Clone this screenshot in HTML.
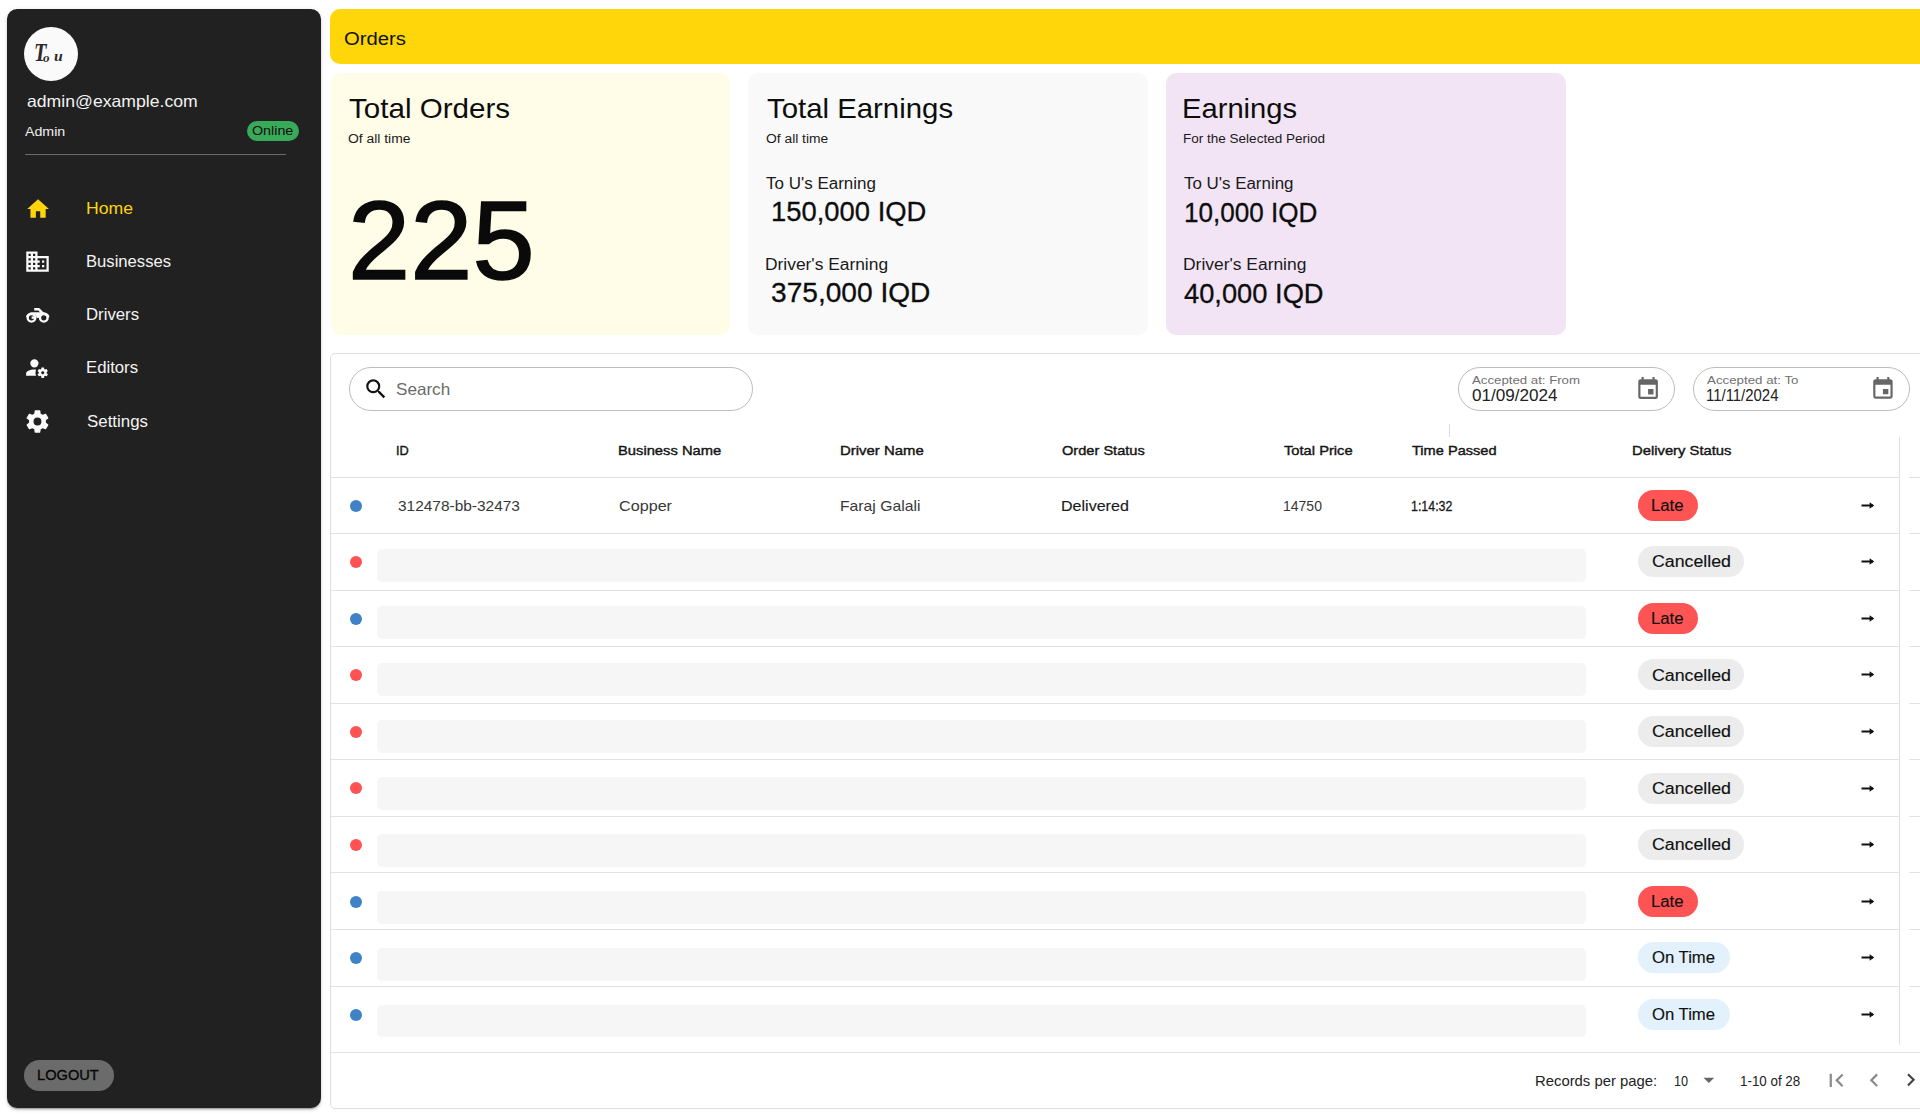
<!DOCTYPE html>
<html><head><meta charset="utf-8"><style>
html,body{margin:0;padding:0;background:#fff;width:1920px;height:1117px;overflow:hidden;}
body{position:relative;font-family:"Liberation Sans",sans-serif;}
.t{position:absolute;white-space:nowrap;line-height:1;transform-origin:0 0;font-family:"Liberation Sans",sans-serif;}
.ic{position:absolute;display:block;}
.box{position:absolute;box-sizing:border-box;}
.dot{position:absolute;left:349.5px;width:12.1px;height:12.1px;border-radius:50%;}
.skel{position:absolute;left:377.3px;width:1208.5px;height:32.4px;border-radius:5px;background:#f6f6f6;}
.chip{position:absolute;left:1637.5px;height:31px;border-radius:16px;}
.hl{position:absolute;left:331px;width:1568px;height:1px;background:#e2e2e2;}
.hl2{position:absolute;left:1909px;width:11px;height:1px;background:#e2e2e2;}
</style></head><body>
<div class="box" style="left:7px;top:9px;width:314px;height:1099px;background:#212121;border-radius:10px;box-shadow:0 3px 1px -2px rgba(0,0,0,.2),0 2px 2px 0 rgba(0,0,0,.14),0 1px 5px 0 rgba(0,0,0,.12)"></div>
<div class="box" style="left:24px;top:26.5px;width:54px;height:54px;border-radius:50%;background:#fafafa"></div>

<div class="box" style="left:246.7px;top:120.8px;width:52.3px;height:20.2px;border-radius:11px;background:#39a95a"></div>
<div class="box" style="left:25px;top:154px;width:261px;height:1px;background:#6a6a6a"></div>
<div class="box" style="left:24px;top:1059.7px;width:89.8px;height:31.3px;border-radius:16px;background:#6b6b6b"></div>

<div class="box" style="left:330px;top:9px;width:1600px;height:55px;background:#ffd60a;border-radius:10px 0 0 10px"></div>
<div class="box" style="left:331px;top:73px;width:399px;height:261.6px;background:#fffce8;border-radius:10px"></div>
<div class="box" style="left:748px;top:73px;width:400px;height:261.6px;background:#f9f9f9;border-radius:10px"></div>
<div class="box" style="left:1166px;top:73px;width:400px;height:261.6px;background:#f2e4f4;border-radius:10px"></div>

<div class="box" style="left:330px;top:352.5px;width:1600px;height:756px;border:1px solid #dedede;border-radius:5px"></div>
<div class="box" style="left:349px;top:367px;width:404px;height:44px;border:1px solid #bdbdbd;border-radius:22px"></div>
<div class="box" style="left:1458px;top:367px;width:217px;height:44px;border:1px solid #bdbdbd;border-radius:22px"></div>
<div class="box" style="left:1693px;top:367px;width:217px;height:44px;border:1px solid #bdbdbd;border-radius:22px"></div>
<div class="box" style="left:1448.5px;top:423.5px;width:1px;height:13px;background:#dcdcdc"></div>
<div class="box" style="left:331px;top:476.5px;width:1568px;height:1px;background:#e0e0e0"></div>
<div class="box" style="left:1909px;top:476.5px;width:11px;height:1px;background:#e0e0e0"></div>
<div class="box" style="left:1899px;top:437px;width:1px;height:608px;background:#e0e0e0"></div>
<div class="box" style="left:331px;top:1052px;width:1589px;height:1px;background:#e0e0e0"></div>
<div class="dot" style="top:499.58px;background:#3f82c6"></div><div class="chip" style="top:489.78px;width:60.5px;background:#ff5454"></div><svg class="ic" style="left:1861px;top:500.78px;width:14px;height:9px" viewBox="0 0 14 9"><path d="M0.5 4.5H12" stroke="#111" stroke-width="2"/><path d="M8.6 1.2L13.2 4.5L8.6 7.8Z" fill="#111"/></svg><div class="dot" style="top:556.14px;background:#ff5252"></div><div class="skel" style="top:549.40px"></div><div class="chip" style="top:546.34px;width:106.5px;background:#ececec"></div><svg class="ic" style="left:1861px;top:557.34px;width:14px;height:9px" viewBox="0 0 14 9"><path d="M0.5 4.5H12" stroke="#111" stroke-width="2"/><path d="M8.6 1.2L13.2 4.5L8.6 7.8Z" fill="#111"/></svg><div class="hl" style="top:533.06px"></div><div class="hl2" style="top:533.06px"></div><div class="dot" style="top:612.70px;background:#3f82c6"></div><div class="skel" style="top:606.36px"></div><div class="chip" style="top:602.90px;width:60.5px;background:#ff5454"></div><svg class="ic" style="left:1861px;top:613.90px;width:14px;height:9px" viewBox="0 0 14 9"><path d="M0.5 4.5H12" stroke="#111" stroke-width="2"/><path d="M8.6 1.2L13.2 4.5L8.6 7.8Z" fill="#111"/></svg><div class="hl" style="top:589.62px"></div><div class="hl2" style="top:589.62px"></div><div class="dot" style="top:669.26px;background:#ff5252"></div><div class="skel" style="top:663.32px"></div><div class="chip" style="top:659.46px;width:106.5px;background:#ececec"></div><svg class="ic" style="left:1861px;top:670.46px;width:14px;height:9px" viewBox="0 0 14 9"><path d="M0.5 4.5H12" stroke="#111" stroke-width="2"/><path d="M8.6 1.2L13.2 4.5L8.6 7.8Z" fill="#111"/></svg><div class="hl" style="top:646.18px"></div><div class="hl2" style="top:646.18px"></div><div class="dot" style="top:725.82px;background:#ff5252"></div><div class="skel" style="top:720.28px"></div><div class="chip" style="top:716.02px;width:106.5px;background:#ececec"></div><svg class="ic" style="left:1861px;top:727.02px;width:14px;height:9px" viewBox="0 0 14 9"><path d="M0.5 4.5H12" stroke="#111" stroke-width="2"/><path d="M8.6 1.2L13.2 4.5L8.6 7.8Z" fill="#111"/></svg><div class="hl" style="top:702.74px"></div><div class="hl2" style="top:702.74px"></div><div class="dot" style="top:782.38px;background:#ff5252"></div><div class="skel" style="top:777.24px"></div><div class="chip" style="top:772.58px;width:106.5px;background:#ececec"></div><svg class="ic" style="left:1861px;top:783.58px;width:14px;height:9px" viewBox="0 0 14 9"><path d="M0.5 4.5H12" stroke="#111" stroke-width="2"/><path d="M8.6 1.2L13.2 4.5L8.6 7.8Z" fill="#111"/></svg><div class="hl" style="top:759.30px"></div><div class="hl2" style="top:759.30px"></div><div class="dot" style="top:838.94px;background:#ff5252"></div><div class="skel" style="top:834.20px"></div><div class="chip" style="top:829.14px;width:106.5px;background:#ececec"></div><svg class="ic" style="left:1861px;top:840.14px;width:14px;height:9px" viewBox="0 0 14 9"><path d="M0.5 4.5H12" stroke="#111" stroke-width="2"/><path d="M8.6 1.2L13.2 4.5L8.6 7.8Z" fill="#111"/></svg><div class="hl" style="top:815.86px"></div><div class="hl2" style="top:815.86px"></div><div class="dot" style="top:895.50px;background:#3f82c6"></div><div class="skel" style="top:891.16px"></div><div class="chip" style="top:885.70px;width:60.5px;background:#ff5454"></div><svg class="ic" style="left:1861px;top:896.70px;width:14px;height:9px" viewBox="0 0 14 9"><path d="M0.5 4.5H12" stroke="#111" stroke-width="2"/><path d="M8.6 1.2L13.2 4.5L8.6 7.8Z" fill="#111"/></svg><div class="hl" style="top:872.42px"></div><div class="hl2" style="top:872.42px"></div><div class="dot" style="top:952.06px;background:#3f82c6"></div><div class="skel" style="top:948.12px"></div><div class="chip" style="top:942.26px;width:92px;background:#e3f1fc"></div><svg class="ic" style="left:1861px;top:953.26px;width:14px;height:9px" viewBox="0 0 14 9"><path d="M0.5 4.5H12" stroke="#111" stroke-width="2"/><path d="M8.6 1.2L13.2 4.5L8.6 7.8Z" fill="#111"/></svg><div class="hl" style="top:928.98px"></div><div class="hl2" style="top:928.98px"></div><div class="dot" style="top:1008.62px;background:#3f82c6"></div><div class="skel" style="top:1005.08px"></div><div class="chip" style="top:998.82px;width:92px;background:#e3f1fc"></div><svg class="ic" style="left:1861px;top:1009.82px;width:14px;height:9px" viewBox="0 0 14 9"><path d="M0.5 4.5H12" stroke="#111" stroke-width="2"/><path d="M8.6 1.2L13.2 4.5L8.6 7.8Z" fill="#111"/></svg><div class="hl" style="top:985.54px"></div><div class="hl2" style="top:985.54px"></div>
<svg class="ic" style="left:24.53px;top:195.58px;width:26.13px;height:26.13px" viewBox="0 0 24 24"><path fill="#ffd40a" d="M10,20V14H14V20H19V12H22L12,3L2,12H5V20H10Z"/></svg><svg class="ic" style="left:24.09px;top:248.29px;width:27.01px;height:27.01px" viewBox="0 0 24 24"><path fill="#fafafa" d="M18,15H16V17H18M18,11H16V13H18M20,19H12V17H14V15H12V13H14V11H12V9H20M10,7H8V5H10M10,11H8V9H10M10,15H8V13H10M10,19H8V17H10M6,7H4V5H6M6,11H4V9H6M6,15H4V13H6M6,19H4V17H6M12,7V3H2V21H22V7H12Z"/></svg><svg class="ic" style="left:24.43px;top:354.96px;width:24.99px;height:24.99px" viewBox="0 0 24 24"><path fill="#fafafa" d="M10 4A4 4 0 0 0 6 8A4 4 0 0 0 10 12A4 4 0 0 0 14 8A4 4 0 0 0 10 4M17 12C16.87 12 16.76 12.09 16.74 12.21L16.55 13.53C16.25 13.66 15.96 13.82 15.7 14L14.46 13.5C14.35 13.5 14.22 13.5 14.15 13.63L13.15 15.36C13.09 15.47 13.11 15.6 13.21 15.68L14.27 16.5C14.25 16.67 14.24 16.83 14.24 17C14.24 17.17 14.25 17.33 14.27 17.5L13.21 18.32C13.12 18.4 13.09 18.53 13.15 18.64L14.15 20.37C14.21 20.5 14.34 20.5 14.46 20.5L15.7 20C15.96 20.18 16.24 20.35 16.55 20.47L16.74 21.79C16.76 21.91 16.86 22 17 22H19C19.11 22 19.22 21.91 19.24 21.79L19.43 20.47C19.73 20.34 20 20.18 20.27 20L21.5 20.5C21.63 20.5 21.76 20.5 21.83 20.37L22.83 18.64C22.89 18.53 22.86 18.4 22.77 18.32L21.7 17.5C21.72 17.33 21.74 17.17 21.74 17C21.74 16.83 21.73 16.67 21.7 16.5L22.76 15.68C22.85 15.6 22.88 15.47 22.82 15.36L21.82 13.63C21.76 13.5 21.63 13.5 21.5 13.5L20.27 14C20 13.82 19.73 13.65 19.42 13.53L19.23 12.21C19.22 12.09 19.11 12 19 12H17M10 14C5.58 14 2 15.79 2 18V20H11.68A7 7 0 0 1 11 17A7 7 0 0 1 11.64 14.09C11.11 14.03 10.56 14 10 14M18 15.5C18.83 15.5 19.5 16.17 19.5 17C19.5 17.83 18.83 18.5 18 18.5C17.16 18.5 16.5 17.83 16.5 17C16.5 16.17 17.17 15.5 18 15.5Z"/></svg><svg class="ic" style="left:24.06px;top:407.71px;width:26.97px;height:26.97px" viewBox="0 0 24 24"><path fill="#fafafa" d="M12,15.5A3.5,3.5 0 0,1 8.5,12A3.5,3.5 0 0,1 12,8.5A3.5,3.5 0 0,1 15.5,12A3.5,3.5 0 0,1 12,15.5M19.43,12.97C19.47,12.65 19.5,12.33 19.5,12C19.5,11.67 19.47,11.34 19.43,11L21.54,9.37C21.73,9.22 21.78,8.95 21.66,8.73L19.66,5.27C19.54,5.05 19.27,4.96 19.050,5.05L16.56,6.05C16.04,5.66 15.5,5.32 14.87,5.07L14.5,2.42C14.46,2.18 14.25,2 14,2H10C9.75,2 9.54,2.18 9.5,2.42L9.13,5.07C8.5,5.32 7.96,5.66 7.44,6.05L4.95,5.05C4.73,4.96 4.46,5.05 4.34,5.27L2.34,8.73C2.21,8.95 2.27,9.22 2.46,9.37L4.57,11C4.53,11.34 4.5,11.67 4.5,12C4.5,12.33 4.53,12.65 4.57,12.97L2.46,14.63C2.27,14.78 2.21,15.05 2.34,15.27L4.34,18.73C4.46,18.95 4.73,19.03 4.95,18.95L7.44,17.94C7.96,18.34 8.5,18.68 9.13,18.93L9.5,21.58C9.54,21.82 9.75,22 10,22H14C14.25,22 14.46,21.82 14.5,21.58L14.87,18.93C15.5,18.67 16.04,18.34 16.56,17.94L19.05,18.95C19.27,19.03 19.54,18.95 19.66,18.73L21.66,15.27C21.78,15.05 21.73,14.78 21.54,14.63L19.43,12.97Z"/></svg><svg class="ic" style="left:362.66px;top:376.16px;width:25.92px;height:25.92px" viewBox="0 0 24 24"><path fill="#111" d="M9.5,3A6.5,6.5 0 0,1 16,9.5C16,11.11 15.41,12.59 14.44,13.73L14.71,14H15.5L20.5,19L19,20.5L14,15.5V14.71L13.73,14.44C12.59,15.41 11.11,16 9.5,16A6.5,6.5 0 0,1 3,9.5A6.5,6.5 0 0,1 9.5,3M9.5,5C7,5 5,7 5,9.5C5,12 7,14 9.5,14C12,14 14,12 14,9.5C14,7 12,5 9.5,5Z"/></svg><svg class="ic" style="left:1635.02px;top:375.81px;width:26.16px;height:26.16px" viewBox="0 0 24 24"><path fill="#666" d="M19,19H5V8H19M16,1V3H8V1H6V3H5C3.89,3 3,3.89 3,5V19A2,2 0 0,0 5,21H19A2,2 0 0,0 21,19V5C21,3.89 20.1,3 19,3H18V1M17,12H12V17H17V12Z"/></svg><svg class="ic" style="left:1870.35px;top:375.93px;width:25.89px;height:25.89px" viewBox="0 0 24 24"><path fill="#666" d="M19,19H5V8H19M16,1V3H8V1H6V3H5C3.89,3 3,3.89 3,5V19A2,2 0 0,0 5,21H19A2,2 0 0,0 21,19V5C21,3.89 20.1,3 19,3H18V1M17,12H12V17H17V12Z"/></svg><svg class="ic" style="left:1696.16px;top:1066.88px;width:25.68px;height:25.68px" viewBox="0 0 24 24"><path fill="#666" d="M7,10L12,15L17,10H7Z"/></svg><svg class="ic" style="left:1823.36px;top:1066.93px;width:26.63px;height:26.63px" viewBox="0 0 24 24"><path fill="#8a8a8a" d="M18.41,16.59L13.82,12L18.41,7.41L17,6L11,12L17,18L18.41,16.59M6,6H8V18H6V6Z"/></svg><svg class="ic" style="left:1860.90px;top:1067.08px;width:26.34px;height:26.34px" viewBox="0 0 24 24"><path fill="#8a8a8a" d="M15.41,16.58L10.83,12L15.41,7.41L14,6L8,12L14,18L15.41,16.58Z"/></svg><svg class="ic" style="left:1898.29px;top:1067.40px;width:25.69px;height:25.69px" viewBox="0 0 24 24"><path fill="#444" d="M8.59,16.58L13.17,12L8.59,7.41L10,6L16,12L10,18L8.59,16.58Z"/></svg><svg class="ic" style="left:22px;top:302px;width:32px;height:26px" viewBox="22 302 32 26">
<g fill="none" stroke="#fafafa" stroke-width="2.4">
<circle cx="31.5" cy="317.8" r="3.8"/>
<circle cx="43.8" cy="317.8" r="3.8"/>
<path d="M27.3 316.3 Q28.8 313.4 32.5 313.4 H43 Q46.8 313.4 48.2 316.3" stroke-linecap="round"/>
<path d="M34.2 309.3 H38.9 L43 313.6" stroke-linejoin="round"/>
<path d="M31.6 317.6 H35"/>
</g>
<path d="M34.5 313 H41.5 L38.5 318 H37 Z" fill="#fafafa"/>
</svg>
<div class="t" style="left:27.00px;top:93.13px;font-size:16.5px;font-weight:400;font-style:normal;font-family:'Liberation Sans', sans-serif;color:#f2f2f2;transform:scaleX(1.0687);">admin@example.com</div>
<div class="t" style="left:25.00px;top:124.99px;font-size:13px;font-weight:400;font-style:normal;font-family:'Liberation Sans', sans-serif;color:#eeeeee;transform:scaleX(1.0924);">Admin</div>
<div class="t" style="left:252.00px;top:123.99px;font-size:13px;font-weight:400;font-style:normal;font-family:'Liberation Sans', sans-serif;color:#111;transform:scaleX(1.0978);">Online</div>
<div class="t" style="left:85.60px;top:200.95px;font-size:16px;font-weight:400;font-style:normal;font-family:'Liberation Sans', sans-serif;color:#ffd40a;transform:scaleX(1.1010);">Home</div>
<div class="t" style="left:85.66px;top:253.85px;font-size:16px;font-weight:400;font-style:normal;font-family:'Liberation Sans', sans-serif;color:#f4f4f4;transform:scaleX(1.0393);">Businesses</div>
<div class="t" style="left:85.65px;top:306.95px;font-size:16px;font-weight:400;font-style:normal;font-family:'Liberation Sans', sans-serif;color:#f4f4f4;transform:scaleX(1.0470);">Drivers</div>
<div class="t" style="left:85.65px;top:360.45px;font-size:16px;font-weight:400;font-style:normal;font-family:'Liberation Sans', sans-serif;color:#f4f4f4;transform:scaleX(1.0451);">Editors</div>
<div class="t" style="left:86.70px;top:413.55px;font-size:16px;font-weight:400;font-style:normal;font-family:'Liberation Sans', sans-serif;color:#f4f4f4;transform:scaleX(1.0551);">Settings</div>
<div class="t" style="left:37.46px;top:1066.88px;font-size:15.5px;font-weight:400;font-style:normal;font-family:'Liberation Sans', sans-serif;color:#050505;transform:scaleX(0.9433);-webkit-text-stroke:0.3px #050505;">LOGOUT</div>
<div class="t" style="left:34.27px;top:41.26px;font-size:24.5px;font-weight:700;font-style:italic;font-family:'Liberation Serif', serif;color:#2b2b2b;transform:scaleX(0.8333);">T</div>
<div class="t" style="left:43.00px;top:50.99px;font-size:13px;font-weight:700;font-style:italic;font-family:'Liberation Serif', serif;color:#2b2b2b;transform:scaleX(1.0000);">o</div>
<div class="t" style="left:54.40px;top:50.15px;font-size:14px;font-weight:700;font-style:italic;font-family:'Liberation Serif', serif;color:#2b2b2b;transform:scaleX(1.1250);">u</div>
<div class="t" style="left:344.10px;top:30.06px;font-size:18px;font-weight:400;font-style:normal;font-family:'Liberation Sans', sans-serif;color:#111;transform:scaleX(1.1271);">Orders</div>
<div class="t" style="left:348.90px;top:95.19px;font-size:28px;font-weight:400;font-style:normal;font-family:'Liberation Sans', sans-serif;color:#0d0d0d;transform:scaleX(1.0561);">Total Orders</div>
<div class="t" style="left:348.10px;top:133.02px;font-size:12.5px;font-weight:400;font-style:normal;font-family:'Liberation Sans', sans-serif;color:#1a1a1a;transform:scaleX(1.1099);">Of all time</div>
<div class="t" style="left:347.74px;top:186.04px;font-size:110.5px;font-weight:400;font-style:normal;font-family:'Liberation Sans', sans-serif;color:#0a0a0a;transform:scaleX(1.0120);-webkit-text-stroke:1.6px #0a0a0a;">225</div>
<div class="t" style="left:766.70px;top:94.79px;font-size:28px;font-weight:400;font-style:normal;font-family:'Liberation Sans', sans-serif;color:#0d0d0d;transform:scaleX(1.0486);">Total Earnings</div>
<div class="t" style="left:766.00px;top:133.32px;font-size:12.5px;font-weight:400;font-style:normal;font-family:'Liberation Sans', sans-serif;color:#1a1a1a;transform:scaleX(1.1064);">Of all time</div>
<div class="t" style="left:766.20px;top:175.55px;font-size:16px;font-weight:400;font-style:normal;font-family:'Liberation Sans', sans-serif;color:#1a1a1a;transform:scaleX(1.0619);">To U's Earning</div>
<div class="t" style="left:770.51px;top:198.02px;font-size:27.5px;font-weight:400;font-style:normal;font-family:'Liberation Sans', sans-serif;color:#0d0d0d;transform:scaleX(0.9962);-webkit-text-stroke:0.3px #0d0d0d;">150,000 IQD</div>
<div class="t" style="left:765.41px;top:256.75px;font-size:16px;font-weight:400;font-style:normal;font-family:'Liberation Sans', sans-serif;color:#1a1a1a;transform:scaleX(1.0860);">Driver's Earning</div>
<div class="t" style="left:771.18px;top:279.32px;font-size:27.5px;font-weight:400;font-style:normal;font-family:'Liberation Sans', sans-serif;color:#0d0d0d;transform:scaleX(1.0222);-webkit-text-stroke:0.3px #0d0d0d;">375,000 IQD</div>
<div class="t" style="left:1181.92px;top:95.09px;font-size:28px;font-weight:400;font-style:normal;font-family:'Liberation Sans', sans-serif;color:#0d0d0d;transform:scaleX(1.0418);">Earnings</div>
<div class="t" style="left:1182.92px;top:133.32px;font-size:12.5px;font-weight:400;font-style:normal;font-family:'Liberation Sans', sans-serif;color:#1a1a1a;transform:scaleX(1.0815);">For the Selected Period</div>
<div class="t" style="left:1184.00px;top:176.15px;font-size:16px;font-weight:400;font-style:normal;font-family:'Liberation Sans', sans-serif;color:#1a1a1a;transform:scaleX(1.0570);">To U's Earning</div>
<div class="t" style="left:1183.90px;top:199.42px;font-size:27.5px;font-weight:400;font-style:normal;font-family:'Liberation Sans', sans-serif;color:#0d0d0d;transform:scaleX(0.9479);-webkit-text-stroke:0.3px #0d0d0d;">10,000 IQD</div>
<div class="t" style="left:1182.91px;top:257.05px;font-size:16px;font-weight:400;font-style:normal;font-family:'Liberation Sans', sans-serif;color:#1a1a1a;transform:scaleX(1.0887);">Driver's Earning</div>
<div class="t" style="left:1184.30px;top:279.62px;font-size:27.5px;font-weight:400;font-style:normal;font-family:'Liberation Sans', sans-serif;color:#0d0d0d;transform:scaleX(0.9923);-webkit-text-stroke:0.3px #0d0d0d;">40,000 IQD</div>
<div class="t" style="left:395.75px;top:381.33px;font-size:16.5px;font-weight:400;font-style:normal;font-family:'Liberation Sans', sans-serif;color:#6b6b6b;transform:scaleX(1.0364);">Search</div>
<div class="t" style="left:1471.90px;top:374.73px;font-size:11.3px;font-weight:400;font-style:normal;font-family:'Liberation Sans', sans-serif;color:#707070;transform:scaleX(1.1699);">Accepted at: From</div>
<div class="t" style="left:1471.90px;top:387.79px;font-size:15.6px;font-weight:400;font-style:normal;font-family:'Liberation Sans', sans-serif;color:#222;transform:scaleX(1.0973);">01/09/2024</div>
<div class="t" style="left:1706.80px;top:374.73px;font-size:11.3px;font-weight:400;font-style:normal;font-family:'Liberation Sans', sans-serif;color:#707070;transform:scaleX(1.1780);">Accepted at: To</div>
<div class="t" style="left:1705.84px;top:387.79px;font-size:15.6px;font-weight:400;font-style:normal;font-family:'Liberation Sans', sans-serif;color:#222;transform:scaleX(0.9566);">11/11/2024</div>
<div class="t" style="left:396.16px;top:444.28px;font-size:13.6px;font-weight:400;font-style:normal;font-family:'Liberation Sans', sans-serif;color:#141414;transform:scaleX(0.9392);-webkit-text-stroke:0.4px #141414;">ID</div>
<div class="t" style="left:617.72px;top:444.28px;font-size:13.6px;font-weight:400;font-style:normal;font-family:'Liberation Sans', sans-serif;color:#141414;transform:scaleX(1.0840);-webkit-text-stroke:0.4px #141414;">Business Name</div>
<div class="t" style="left:839.50px;top:444.28px;font-size:13.6px;font-weight:400;font-style:normal;font-family:'Liberation Sans', sans-serif;color:#141414;transform:scaleX(1.0974);-webkit-text-stroke:0.4px #141414;">Driver Name</div>
<div class="t" style="left:1062.00px;top:444.28px;font-size:13.6px;font-weight:400;font-style:normal;font-family:'Liberation Sans', sans-serif;color:#141414;transform:scaleX(1.0742);-webkit-text-stroke:0.4px #141414;">Order Status</div>
<div class="t" style="left:1284.20px;top:444.28px;font-size:13.6px;font-weight:400;font-style:normal;font-family:'Liberation Sans', sans-serif;color:#141414;transform:scaleX(1.0811);-webkit-text-stroke:0.4px #141414;">Total Price</div>
<div class="t" style="left:1411.70px;top:444.28px;font-size:13.6px;font-weight:400;font-style:normal;font-family:'Liberation Sans', sans-serif;color:#141414;transform:scaleX(1.0733);-webkit-text-stroke:0.4px #141414;">Time Passed</div>
<div class="t" style="left:1632.31px;top:444.28px;font-size:13.6px;font-weight:400;font-style:normal;font-family:'Liberation Sans', sans-serif;color:#141414;transform:scaleX(1.0881);-webkit-text-stroke:0.4px #141414;">Delivery Status</div>
<div class="t" style="left:398.00px;top:498.20px;font-size:15px;font-weight:400;font-style:normal;font-family:'Liberation Sans', sans-serif;color:#383838;transform:scaleX(1.0297);">312478-bb-32473</div>
<div class="t" style="left:618.80px;top:498.20px;font-size:15px;font-weight:400;font-style:normal;font-family:'Liberation Sans', sans-serif;color:#383838;transform:scaleX(1.0772);">Copper</div>
<div class="t" style="left:839.55px;top:498.20px;font-size:15px;font-weight:400;font-style:normal;font-family:'Liberation Sans', sans-serif;color:#383838;transform:scaleX(1.0483);">Faraj Galali</div>
<div class="t" style="left:1060.93px;top:498.20px;font-size:15px;font-weight:400;font-style:normal;font-family:'Liberation Sans', sans-serif;color:#1a1a1a;transform:scaleX(1.0706);-webkit-text-stroke:0.15px #1a1a1a;">Delivered</div>
<div class="t" style="left:1283.27px;top:498.20px;font-size:15px;font-weight:400;font-style:normal;font-family:'Liberation Sans', sans-serif;color:#383838;transform:scaleX(0.9339);">14750</div>
<div class="t" style="left:1410.87px;top:498.20px;font-size:15px;font-weight:400;font-style:normal;font-family:'Liberation Sans', sans-serif;color:#1a1a1a;transform:scaleX(0.8274);-webkit-text-stroke:0.3px #1a1a1a;">1:14:32</div>
<div class="t" style="left:1650.76px;top:497.93px;font-size:16px;font-weight:400;font-style:normal;font-family:'Liberation Sans', sans-serif;color:#111;transform:scaleX(1.0449);-webkit-text-stroke:0.15px #111;">Late</div>
<div class="t" style="left:1651.80px;top:554.49px;font-size:16px;font-weight:400;font-style:normal;font-family:'Liberation Sans', sans-serif;color:#111;transform:scaleX(1.1102);-webkit-text-stroke:0.15px #111;">Cancelled</div>
<div class="t" style="left:1650.76px;top:611.05px;font-size:16px;font-weight:400;font-style:normal;font-family:'Liberation Sans', sans-serif;color:#111;transform:scaleX(1.0449);-webkit-text-stroke:0.15px #111;">Late</div>
<div class="t" style="left:1651.80px;top:667.61px;font-size:16px;font-weight:400;font-style:normal;font-family:'Liberation Sans', sans-serif;color:#111;transform:scaleX(1.1102);-webkit-text-stroke:0.15px #111;">Cancelled</div>
<div class="t" style="left:1651.80px;top:724.17px;font-size:16px;font-weight:400;font-style:normal;font-family:'Liberation Sans', sans-serif;color:#111;transform:scaleX(1.1102);-webkit-text-stroke:0.15px #111;">Cancelled</div>
<div class="t" style="left:1651.80px;top:780.73px;font-size:16px;font-weight:400;font-style:normal;font-family:'Liberation Sans', sans-serif;color:#111;transform:scaleX(1.1102);-webkit-text-stroke:0.15px #111;">Cancelled</div>
<div class="t" style="left:1651.80px;top:837.29px;font-size:16px;font-weight:400;font-style:normal;font-family:'Liberation Sans', sans-serif;color:#111;transform:scaleX(1.1102);-webkit-text-stroke:0.15px #111;">Cancelled</div>
<div class="t" style="left:1650.76px;top:893.85px;font-size:16px;font-weight:400;font-style:normal;font-family:'Liberation Sans', sans-serif;color:#111;transform:scaleX(1.0449);-webkit-text-stroke:0.15px #111;">Late</div>
<div class="t" style="left:1651.80px;top:950.41px;font-size:16px;font-weight:400;font-style:normal;font-family:'Liberation Sans', sans-serif;color:#111;transform:scaleX(1.0419);-webkit-text-stroke:0.15px #111;">On Time</div>
<div class="t" style="left:1651.80px;top:1006.97px;font-size:16px;font-weight:400;font-style:normal;font-family:'Liberation Sans', sans-serif;color:#111;transform:scaleX(1.0419);-webkit-text-stroke:0.15px #111;">On Time</div>
<div class="t" style="left:1534.61px;top:1072.50px;font-size:15px;font-weight:400;font-style:normal;font-family:'Liberation Sans', sans-serif;color:#222;transform:scaleX(0.9898);">Records per page:</div>
<div class="t" style="left:1673.75px;top:1072.50px;font-size:15px;font-weight:400;font-style:normal;font-family:'Liberation Sans', sans-serif;color:#222;transform:scaleX(0.8473);">10</div>
<div class="t" style="left:1739.51px;top:1072.50px;font-size:15px;font-weight:400;font-style:normal;font-family:'Liberation Sans', sans-serif;color:#222;transform:scaleX(0.8911);">1-10 of 28</div>
</body></html>
